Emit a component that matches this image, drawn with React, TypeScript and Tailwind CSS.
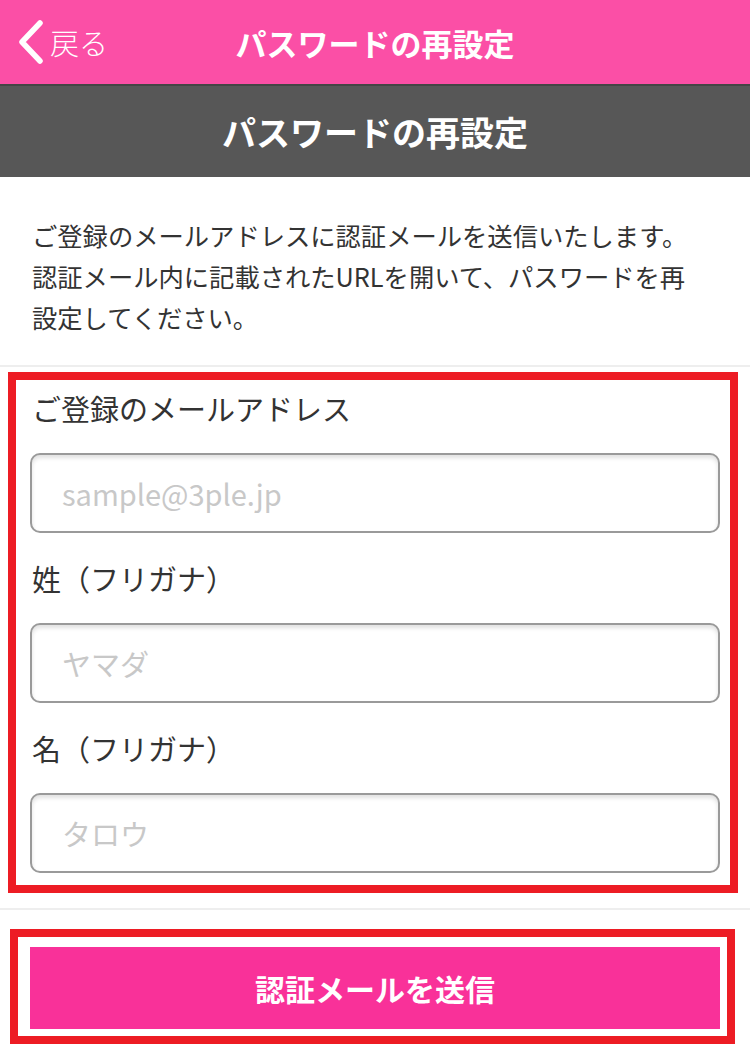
import { useState } from "react";

const font = { fontFamily: '"Noto Sans CJK JP", "Noto Sans", sans-serif' };

function Field({ label, placeholder, type = "text" }: { label: string; placeholder: string; type?: string }) {
  const [value, setValue] = useState("");
  return (
    <div className="flex flex-col">
      <label className="h-[40px] pl-[2px] text-[29px] leading-[40px] text-[#333333]">{label}</label>
      <input
        type={type}
        value={value}
        onChange={(e) => setValue(e.target.value)}
        placeholder={placeholder}
        className="mt-[25px] h-[80px] w-full rounded-[10px] border-2 border-[#9a9a9a] bg-white pl-[30px] text-[29px] text-[#333] shadow-[inset_0_3px_4px_rgba(0,0,0,0.12)] outline-none placeholder:text-[#c8c8c8]"
        style={font}
      />
    </div>
  );
}

export default function App() {
  return (
    <div className="min-h-[1059px] w-[750px] bg-white" style={font}>
      <header className="relative flex h-[84px] items-center justify-center bg-[#fb4fa6]">
        <button className="absolute left-0 top-0 flex h-full items-center pl-[18px] text-white">
          <svg width="26" height="44" viewBox="0 0 26 44" fill="none">
            <path d="M22 3 L4 22 L22 41" stroke="white" strokeWidth="5.5" strokeLinecap="round" strokeLinejoin="round" />
          </svg>
          <span className="ml-[6px] text-[29px] font-light leading-none">戻る</span>
        </button>
        <h1 className="text-[31px] font-bold leading-none text-white">パスワードの再設定</h1>
      </header>

      <div className="flex h-[93px] items-center justify-center border-t-2 border-[#454545] bg-[#575757]">
        <h2 className="text-[34px] font-bold leading-none text-white">パスワードの再設定</h2>
      </div>

      <p className="whitespace-nowrap px-8 pb-[27px] pt-[38px] text-[25.3px] leading-[41px] text-[#333333]">
        ご登録のメールアドレスに認証メールを送信いたします。
        <br />
        認証メール内に記載されたURLを開いて、パスワードを再
        <br />
        設定してください。
      </p>

      <div className="h-[2px] bg-[#eeeeee]" />

      <form className="ml-2 mr-3 mt-[5px] flex flex-col gap-[25px] border-8 border-[#ed1c24] pb-[12px] pl-[14px] pr-[10px] pt-[8px]">
        <Field label="ご登録のメールアドレス" placeholder="sample@3ple.jp" type="email" />
        <Field label="姓（フリガナ）" placeholder="ヤマダ" />
        <Field label="名（フリガナ）" placeholder="タロウ" />
      </form>

      <div className="mt-[15px] h-[2px] bg-[#eeeeee]" />

      <div className="ml-[10px] mr-[15px] mt-[19px] border-8 border-[#ed1c24] pb-[7px] pl-[12px] pr-[7px] pt-[10px]">
        <button className="flex h-[82px] w-full items-center justify-center bg-[#f93199] text-[30px] font-bold text-white">
          認証メールを送信
        </button>
      </div>
    </div>
  );
}
